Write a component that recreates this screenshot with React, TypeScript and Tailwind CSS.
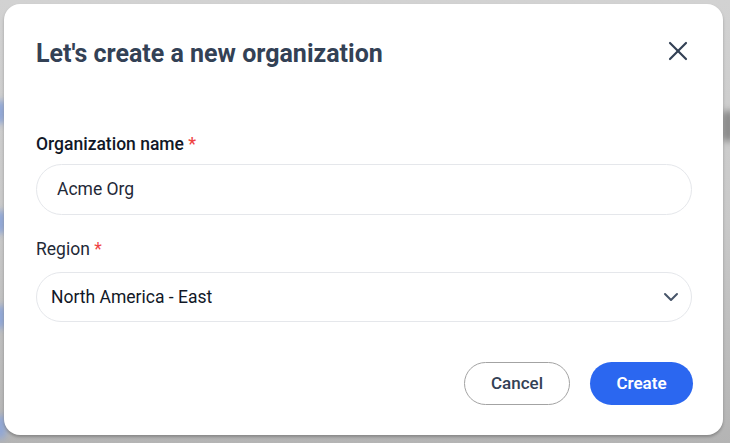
import { X, ChevronDown } from "lucide-react";

export default function App() {
  return (
    <div
      className="relative h-[443px] w-[730px] overflow-hidden bg-gradient-to-b from-[#d2d2d2] via-[#c9c9c9] to-[#b4b4b4] pl-1 pt-1"
      style={{ fontFamily: "Roboto, 'Liberation Sans', sans-serif" }}
    >
      {/* blurred backdrop bits */}
      <div className="absolute left-[-6px] top-[100px] h-6 w-3 rounded-full bg-[#8fa6d6] blur-[3px]" />
      <div className="absolute left-[-6px] top-[210px] h-6 w-3 rounded-full bg-[#8fa6d6] blur-[3px]" />
      <div className="absolute left-[-6px] top-[305px] h-6 w-3 rounded-full bg-[#8fa6d6] blur-[3px]" />
      <div className="absolute left-[-6px] top-[415px] h-6 w-3 rounded-full bg-[#8fa6d6] blur-[3px]" />
      <div className="absolute right-[-4px] top-[110px] h-8 w-3 rounded-full bg-[#8a8a8a] blur-[3px]" />

      <div className="relative flex h-[431px] w-[719px] flex-col rounded-2xl bg-white pb-[30px] pl-8 pr-[31px] pt-[36px] shadow-[0_2px_3px_rgba(0,0,0,0.25)]">
        <div className="flex h-7 items-center justify-between">
          <h2 className="text-[25px] font-bold leading-7 text-[#334155]">Let's create a new organization</h2>
          <button className="mr-[-2px] mt-[-6px] text-[#334155]">
            <X className="h-8 w-8" strokeWidth={1.6} />
          </button>
        </div>

        <label className="mt-[64px] text-[17.5px] font-medium leading-6 text-[#111827]">
          Organization name <span className="text-[#ef4444]">*</span>
        </label>
        <div className="mt-2 flex h-[51px] items-center rounded-full border border-[#e5e7eb] px-5 text-[17.5px] text-[#1f2937]">
          Acme Org
        </div>

        <label className="mt-[22px] text-[17.5px] leading-6 text-[#1f2937]">
          Region <span className="text-[#ef4444]">*</span>
        </label>
        <div className="mt-[11px] flex h-[50px] items-center justify-between rounded-full border border-[#e5e7eb] pl-[14px] pr-2 text-[17.5px] text-[#111827]">
          <span>North America - East</span>
          <ChevronDown className="h-6 w-6 text-[#475569]" strokeWidth={2} />
        </div>

        <div className="mr-[-1px] mt-10 flex justify-end gap-5">
          <button className="h-[43px] w-[106px] rounded-full border border-[#a3a3a3] text-[17px] font-medium text-[#334155]">
            Cancel
          </button>
          <button className="h-[43px] w-[103px] rounded-full bg-[#2b67f0] text-[17px] font-semibold text-white">
            Create
          </button>
        </div>
      </div>
    </div>
  );
}
